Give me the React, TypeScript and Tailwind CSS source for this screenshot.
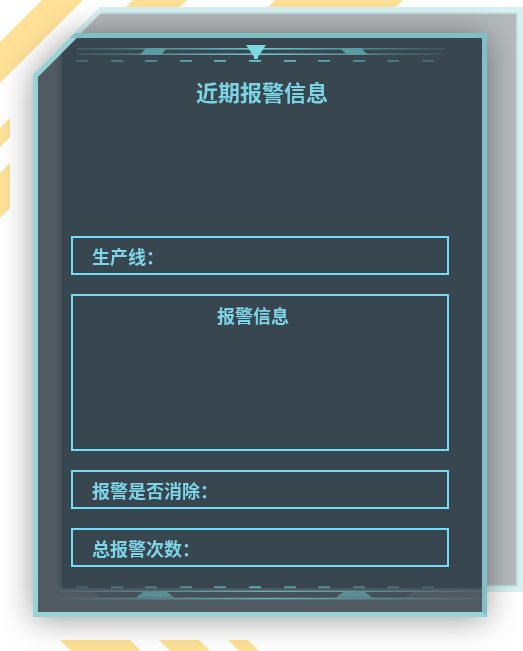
const DASHES = [0, 35, 69, 104, 138, 173, 208, 242, 277, 311, 346];

// yellow hazard stripes peeking out around the panel
function Stripes() {
  return (
    <svg className="absolute inset-0" width="523" height="651" viewBox="0 0 523 651">
      <g fill="#fee197">
        <polygon points="42,0 83,0 0,83 0,42" />
        <polygon points="133,0 187,0 177,10 123,10" />
        <polygon points="275,0 403,0 393,10 265,10" />
        <polygon points="0,128 10,118 10,137 0,147" />
        <polygon points="0,173 10,163 10,208 0,218" />
        <polygon points="60,640 130,640 141,651 71,651" />
        <polygon points="159,640 199,640 210,651 170,651" />
        <polygon points="228,640 248,640 259,651 239,651" />
      </g>
    </svg>
  );
}

function dashOpacity(i: number) {
  const d = Math.abs(i - 5);
  return 1 - d * 0.14;
}

function HeaderDeco() {
  return (
    <svg className="absolute left-[24px] top-0" width="420" height="30" viewBox="0 0 420 30">
      <defs>
        <linearGradient id="hfade" gradientUnits="userSpaceOnUse" x1="15" y1="0" x2="383" y2="0">
          <stop offset="0" stopColor="#6cc7cd" stopOpacity="0.15" />
          <stop offset="0.5" stopColor="#6cc7cd" stopOpacity="1" />
          <stop offset="1" stopColor="#6cc7cd" stopOpacity="0.1" />
        </linearGradient>
      </defs>
      <rect x="15" y="10" width="368" height="1.6" fill="url(#hfade)" />
      <rect x="15" y="15.4" width="368" height="1.6" fill="url(#hfade)" />
      <polygon points="84,10 105,10 99,17 78,17" fill="#5a9ca2" />
      <polygon points="278,10 299,10 306,17 285,17" fill="#5a9ca2" />
      <polygon points="184,7 204,7 196,19 196,21 192,21 192,19" fill="#7ad8e0" />
      {DASHES.map((x, i) => (
        <rect key={i} x={14 + x} y="22" width="12" height="1.8" fill="#6cc7cd" opacity={dashOpacity(i)} />
      ))}
    </svg>
  );
}

function FooterDeco() {
  return (
    <svg className="absolute left-0 top-[542px]" width="444" height="30" viewBox="0 0 444 30">
      <defs>
        <linearGradient id="ffade" gradientUnits="userSpaceOnUse" x1="22" y1="0" x2="444" y2="0">
          <stop offset="0" stopColor="#6cc7cd" stopOpacity="0.1" />
          <stop offset="0.5" stopColor="#6cc7cd" stopOpacity="0.8" />
          <stop offset="1" stopColor="#6cc7cd" stopOpacity="0.1" />
        </linearGradient>
      </defs>
      {DASHES.map((x, i) => (
        <rect key={i} x={38 + x} y="6.3" width="12" height="1.8" fill="#6cc7cd" opacity={dashOpacity(i) * 0.8} />
      ))}
      <rect x="22" y="10.6" width="422" height="1.4" fill="url(#ffade)" />
      <polygon points="57,12 105,12 98,17.5 64,17.5" fill="#44515a" />
      <polygon points="129,12 305,12 298,17.5 136,17.5" fill="#44515a" />
      <polygon points="327,12 375,12 368,17.5 334,17.5" fill="#44515a" />
      <polygon points="105,12 129,12 136,17.5 98,17.5" fill="#5e9ba1" opacity="0.8" />
      <polygon points="305,12 327,12 334,17.5 298,17.5" fill="#5e9ba1" opacity="0.8" />
      <rect x="22" y="17.8" width="422" height="1.6" fill="url(#ffade)" />
    </svg>
  );
}

export default function App() {
  const box = 'h-[39px] border-2 border-[#74dcf7] flex items-center pl-[19px] text-[18px] leading-[26px] font-bold text-[#7ed5e8]';

  return (
    <div className="relative w-[523px] h-[651px] overflow-hidden bg-white font-['Noto_Sans_CJK_SC','Noto_Sans',sans-serif]">
      <Stripes />

      {/* back plate */}
      <div className="absolute left-[62px] top-[7px] w-[461px] h-[585px] bg-[#d8f1f2] p-[5px] [clip-path:polygon(38px_0,100%_0,100%_100%,0_100%,0_38px)]">
        <div className="h-full bg-[#b5babd] shadow-[inset_0_0_0_2px_#c4e3e5] [clip-path:polygon(35px_0,100%_0,100%_100%,0_100%,0_35px)]" />
      </div>

      {/* front panel */}
      <div className="relative ml-[33px] mt-[33px] w-[454px] [filter:drop-shadow(0_2px_16px_rgba(0,0,0,0.4))]">
        <div className="border-[5px] border-t-[#80c0c5] border-r-[#80c0c5] border-b-[#98d3d7] border-l-[#98d3d7] bg-[#98d3d7] [clip-path:polygon(42px_0,100%_0,100%_100%,0_100%,0_42px)]">
          <div className="relative h-[574px] bg-[#4f5a62] [clip-path:polygon(39px_0,100%_0,100%_100%,0_100%,0_39px)]">
            <div className="absolute left-[24px] top-0 right-0 bottom-[24px] bg-[#38464f] shadow-[-3px_0_4px_rgba(0,0,0,0.12)]" />
            <HeaderDeco />
            <FooterDeco />

            <div className="relative flex flex-col px-[33px]">
              <h2 className="mt-[38px] pl-[4px] text-center text-[22px] leading-[30px] font-bold text-[#7bd4e3]">
                近期报警信息
              </h2>

              <div className={`mt-[130px] ${box}`}>生产线：</div>

              <div className="mt-[19px] h-[157px] border-2 border-[#74dcf7] pt-[6px] pr-[14px] text-center text-[18px] leading-[26px] font-bold text-[#7ed5e8]">
                报警信息
              </div>

              <div className={`mt-[19px] ${box}`}>报警是否消除：</div>
              <div className={`mt-[19px] ${box}`}>总报警次数：</div>
            </div>
          </div>
        </div>
      </div>
    </div>
  );
}
